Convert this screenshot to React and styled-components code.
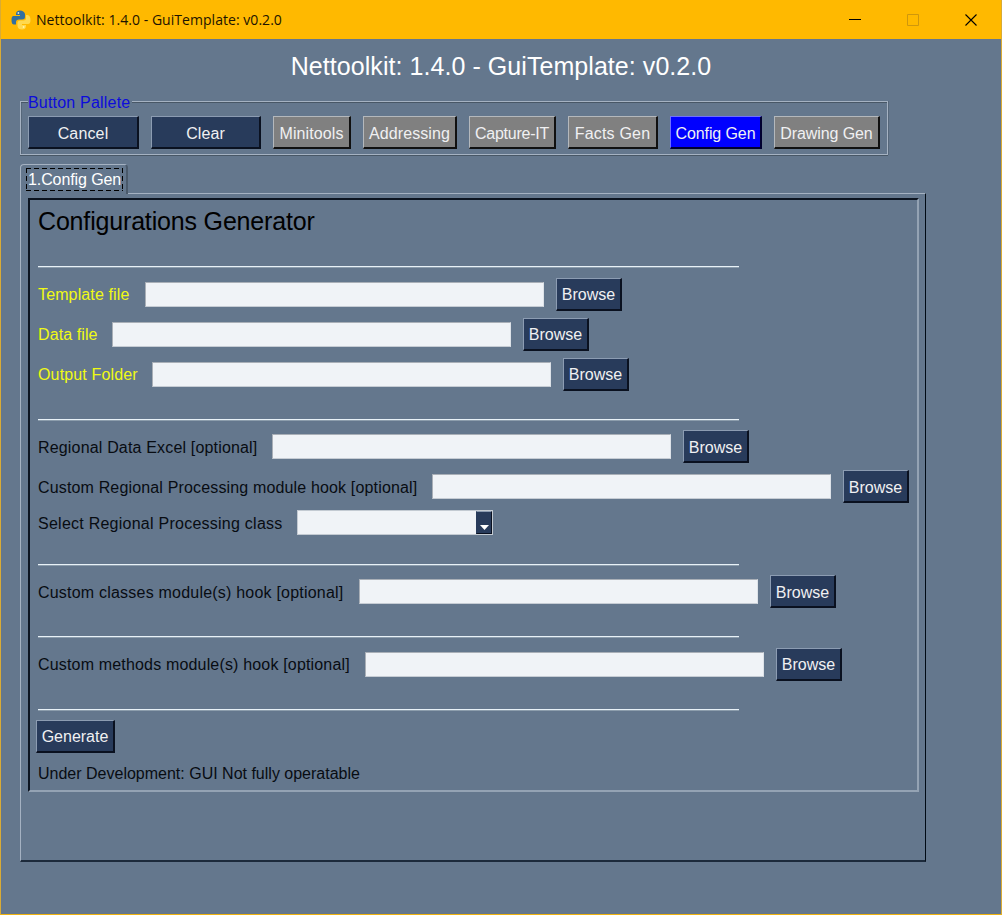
import React from "react";
import styled, { createGlobalStyle, css } from "styled-components";

const Global = createGlobalStyle`
  * { box-sizing: border-box; }
  html, body { margin: 0; padding: 0; background: #64778d; }
  button, input { font: inherit; border-radius: 0; margin: 0; }
`;

const Window = styled.div`
  width: 1002px;
  height: 915px;
  display: flex;
  flex-direction: column;
  overflow: hidden;
  background: #64778d;
  border: 1px solid #d9ab35;
  border-top: 0;
  border-bottom-color: #f0b310;
  font: 16px/20px "Liberation Sans", Arial, sans-serif;
  color: #000;
`;

const TitleBar = styled.header`
  height: 39px;
  flex: none;
  margin: 0 -1px;
  padding-left: 11px;
  display: flex;
  align-items: center;
  background: #ffb900;
`;

const TitleText = styled.span`
  flex: 1;
  margin-left: 5px;
  font: 14px/20px "Open Sans", "Noto Sans", sans-serif;
  letter-spacing: ${(p) => p.$spacing}px;
  color: #1c1400;
  white-space: pre;
`;

const WindowControls = styled.div`
  display: flex;
  gap: 46px;
  padding-right: 25px;
`;

const Heading = styled.h1`
  margin: 13px 0 0;
  height: 49px;
  font-size: 25px;
  line-height: 29px;
  font-weight: 400;
  letter-spacing: ${(p) => p.$spacing}px;
  text-align: center;
  color: #fff;
  white-space: pre;
`;

const Palette = styled.section`
  width: 868px;
  height: 54px;
  margin-left: 19px;
  padding: 14px 0 0 7px;
  display: flex;
  gap: 12px;
  position: relative;
  border: 1px solid #a5b2c2;
  box-shadow: 0 1px 0 #485766, inset 0 1px 0 #485766, 1px 0 0 #56677a, inset 1px 0 0 #56677a;
`;

const Legend = styled.span`
  position: absolute;
  left: 7px;
  top: -9px;
  width: 104px;
  height: 20px;
  letter-spacing: ${(p) => p.$spacing}px;
  background: #64778d;
  color: #0c0cdc;
  white-space: pre;
`;

const tones = {
  navy: css`background: #283b5b; border-color: #8c9cb2 #0a1120 #0a1120 #8c9cb2;`,
  gray: css`background: #808080; border-color: #b4b8bc #101010 #101010 #b4b8bc;`,
  blue: css`background: #0000ff; border-color: #7070ff #000030 #000030 #7070ff;`,
};

const Button = styled.button`
  flex: none;
  width: ${(p) => p.$width}px;
  height: 33px;
  padding: ${(p) => (p.$raised ? 1 : 3)}px 0 0;
  border: 2px solid;
  border-width: 1px 2px 2px 1px;
  color: #f0f0f2;
  letter-spacing: ${(p) => p.$spacing || 0}px;
  white-space: pre;
  ${(p) => tones[p.$tone || "navy"]}
`;

const Tab = styled.div`
  width: 108px;
  height: 30px;
  margin: 9px 0 -1px 19px;
  padding: 3px 0 0 5px;
  position: relative;
  z-index: 1;
  background: #64778d;
  border: 1px solid #a5b2c2;
  border-right: 2px solid #4b5a6b;
  border-bottom: 0;
  border-radius: 4px 4px 0 0;
`;

const dashX = "repeating-linear-gradient(90deg, #000 0 5px, transparent 5px 8px)";
const dashY = "repeating-linear-gradient(180deg, #000 0 5px, transparent 5px 8px)";

const TabLabel = styled.span`
  display: block;
  width: 97px;
  height: 23px;
  padding-left: 2px;
  line-height: 24px;
  background:
    ${dashX} 0 0 / 100% 1px no-repeat,
    ${dashX} 0 100% / 100% 1px no-repeat,
    ${dashY} 0 0 / 1px 100% no-repeat,
    ${dashY} 100% 0 / 1px 100% no-repeat;
  letter-spacing: ${(p) => p.$spacing}px;
  color: #fff;
  white-space: pre;
`;

const Notebook = styled.main`
  width: 906px;
  height: 669px;
  margin-left: 19px;
  padding: 4px 0 0 7px;
  flex: none;
  border: 1px solid #a5b2c2;
  border-right-color: #000a14;
  border-bottom: 2px solid #1c2a3b;
`;

const Panel = styled.div`
  width: 891px;
  height: 594px;
  padding: 6px 0 0 8px;
  border: 2px solid;
  border-color: #0c1420 #94a3b4 #94a3b4 #0c1420;
`;

const PanelTitle = styled.h2`
  margin: 0;
  height: 60px;
  font-size: 25px;
  line-height: 31px;
  font-weight: 400;
  letter-spacing: ${(p) => p.$spacing}px;
  white-space: pre;
`;

const Group = styled.div`
  height: ${(p) => p.$height}px;
  padding-top: ${(p) => p.$top}px;
  width: 701px;
  border-top: 1px solid #e8f1f7;
  box-shadow: inset 0 1px 0 #8c9dac;
`;

const Row = styled.div`
  height: 40px;
  display: flex;
  align-items: flex-start;
`;

const ActionRow = styled(Row)`
  margin-left: -2px;
`;

const Label = styled.label`
  display: block;
  flex: none;
  width: ${(p) => p.$width}px;
  margin-top: ${(p) => (p.$top === undefined ? 7 : p.$top)}px;
  letter-spacing: ${(p) => p.$spacing || 0}px;
  color: ${(p) => (p.$required ? "#f0fa14" : "#080c12")};
  white-space: pre;
`;

const Field = styled.input`
  flex: none;
  width: 399px;
  height: 25px;
  margin: 4px 12px 0 0;
  padding: 0 3px;
  border: 1px solid #a9afb7;
  border-right-color: #dde2e8;
  border-bottom-color: #c6ccd4;
  background: #f0f3f7;
  outline: 0;
`;

const Combo = styled.div`
  width: 196px;
  height: 25px;
  display: flex;
  justify-content: flex-end;
  border: 1px solid #c3cad2;
  background: #f0f3f7;
`;

const ComboArrow = styled.div`
  width: 16px;
  display: flex;
  justify-content: center;
  align-items: flex-end;
  padding-bottom: 3px;
  background: #283b5b;
  border: 1px solid;
  border-color: #8c9cb2 #0a1120 #0a1120 #283b5b;
`;

function Logo() {
  return (
    <svg width="20" height="20" viewBox="0 0 20 20">
      <path d="M5 4Q5 .5 9 .5T14 4V7Q14 9.500 11 9.500H8Q5 9.500 5 12V14.500H3Q.5 14.500 .5 10T3 6H9V5H5Z" fill="#326f9f" />
      <path d="M15 16Q15 19.500 11 19.500T6.500 16V13Q6.500 10.500 9.500 10.500H12.500Q15 10.500 15 8V5H16.500Q19.500 5.500 19.500 10T16.500 14H11V15H15Z" fill="#ffd94f" />
      <circle cx="7.400" cy="3" r=".9" fill="#dce5df" />
      <circle cx="12.600" cy="17" r=".9" fill="#fff3ae" />
    </svg>
  );
}

function FileRow({ label, width, required, spacing, top, raised }) {
  return (
    <Row>
      <Label $width={width} $required={required} $spacing={spacing} $top={top}>{label}</Label>
      <Field aria-label={label} />
      <Button $width={66} $raised={raised}>Browse</Button>
    </Row>
  );
}

const tools = [
  ["Cancel", 111, "navy", 0.15],
  ["Clear", 110, "navy", 0.1],
  ["Minitools", 78, "gray", 0.1],
  ["Addressing", 94, "gray", 0.1],
  ["Capture-IT", 87, "gray", -0.25],
  ["Facts Gen", 90, "gray", 0.2],
  ["Config Gen", 92, "blue", -0.1],
  ["Drawing Gen", 106, "gray", -0.1],
];

export default function App() {
  return (
    <>
      <Global />
      <Window>
        <TitleBar>
          <Logo />
          <TitleText $spacing={0.04}>Nettoolkit: 1.4.0 - GuiTemplate: v0.2.0</TitleText>
          <WindowControls>
            <svg width="12" height="12"><path d="M0 5.500H12" stroke="#000" /></svg>
            <svg width="12" height="12"><path d="M.5.5H11.500V11.500H.5Z" fill="none" stroke="#cf970c" /></svg>
            <svg width="12" height="12"><path d="M.5.5L11.500 11.500M11.500.5L.5 11.500" stroke="#000" strokeWidth="1.100" /></svg>
          </WindowControls>
        </TitleBar>
        <Heading $spacing={0.06}>Nettoolkit: 1.4.0 - GuiTemplate: v0.2.0</Heading>
        <Palette>
          <Legend $spacing={0.2}>Button Pallete</Legend>
          {tools.map(([name, width, tone, spacing]) => (
            <Button key={name} $width={width} $tone={tone} $spacing={spacing}>{name}</Button>
          ))}
        </Palette>
        <Tab><TabLabel $spacing={-0.1}>1.Config Gen</TabLabel></Tab>
        <Notebook>
          <Panel>
            <PanelTitle $spacing={-0.17}>Configurations Generator</PanelTitle>
            <Group $height={153} $top={11}>
              <FileRow label="Template file" width={107} spacing={0.13} required raised />
              <FileRow label="Data file" width={74} spacing={0.1} required raised />
              <FileRow label="Output Folder" width={114} spacing={0.15} required raised />
            </Group>
            <Group $height={145} $top={10}>
              <FileRow label="Regional Data Excel [optional]" width={234} spacing={0.17} top={8} />
              <FileRow label="Custom Regional Processing module hook [optional]" width={394} spacing={0.155} top={8} />
              <Row>
                <Label $width={259} $top={4} $spacing={0.25}>Select Regional Processing class</Label>
                <Combo>
                  <ComboArrow>
                    <svg width="9" height="5"><path d="M0 0H9L4.500 5Z" fill="#fff" /></svg>
                  </ComboArrow>
                </Combo>
              </Row>
            </Group>
            <Group $height={72} $top={10}>
              <FileRow label="Custom classes module(s) hook [optional]" width={321} spacing={0.21} top={8} />
            </Group>
            <Group $height={73} $top={11}>
              <FileRow label="Custom methods module(s) hook [optional]" width={327} spacing={0.17} raised />
            </Group>
            <Group $height={79} $top={10}>
              <ActionRow><Button $width={79} $raised>Generate</Button></ActionRow>
              <Label $width={400} $top={4}>Under Development: GUI Not fully operatable</Label>
            </Group>
          </Panel>
        </Notebook>
      </Window>
    </>
  );
}
